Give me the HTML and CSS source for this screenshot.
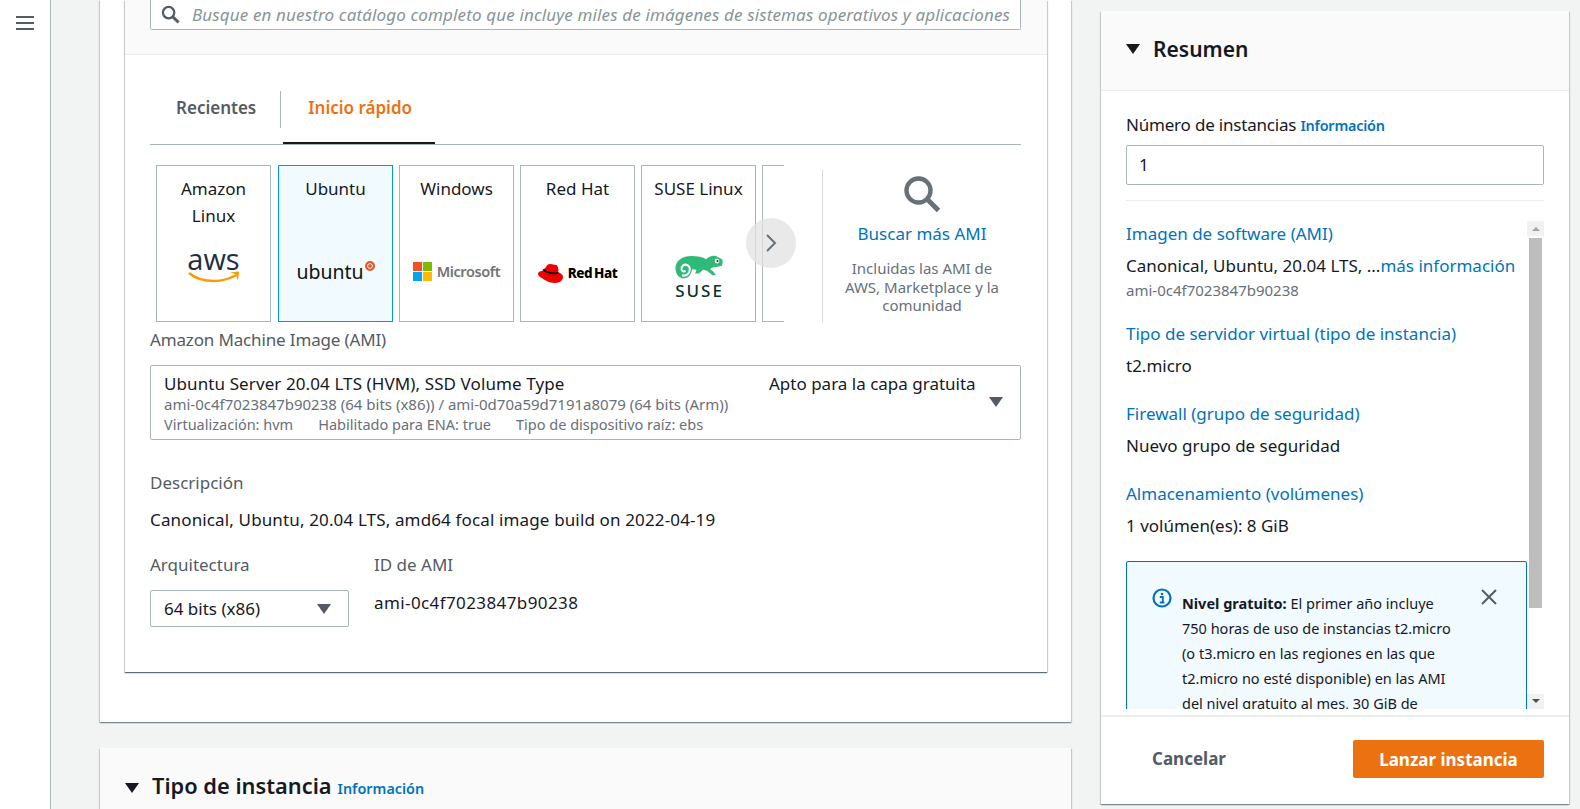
FILE: index.html
```html
<!DOCTYPE html>
<html lang="es">

<head>
    <meta charset="UTF-8">
    <title>Lanzar una instancia</title>
    <link rel="stylesheet" href="styles.css">
</head>

<body>
    <nav class="sidebar">
        <svg class="burger" viewBox="0 0 18 16" width="18" height="16"><path d="M0 2h18M0 8h18M0 14h18" stroke="#545b64" stroke-width="2"/></svg>
    </nav>

    <main class="main">
        <section class="panel">
            <div class="inner">
                <div class="inner-head">
                    <div class="search">
                        <svg viewBox="0 0 20 20" width="19" height="19"><circle cx="8" cy="8" r="6" fill="none" stroke="#545b64" stroke-width="2.4"/><path d="M12.5 12.5l6 6" stroke="#545b64" stroke-width="3"/></svg>
                        <span>Busque en nuestro catálogo completo que incluye miles de imágenes de sistemas operativos y aplicaciones</span>
                    </div>
                </div>
                <div class="inner-body">
                    <div class="tabs">
                        <span class="tab">Recientes</span>
                        <span class="tab tab-active">Inicio rápido</span>
                    </div>

                    <div class="gallery">
                        <div class="cards">
                            <div class="card card-first">
                                <div class="card-name">Amazon<br>Linux</div>
                                <div class="logo logo-aws">
                                    <span class="aws-text">aws</span>
                                    <svg viewBox="0 0 52 13" width="52" height="13"><path d="M1 2c7 6 16 8 25 8 8 0 15-2 22-6" fill="none" stroke="#ff9900" stroke-width="2.4"/><path d="M42 1.500l9-1-1 9-2.500-6.500z" fill="#ff9900"/></svg>
                                </div>
                            </div>
                            <div class="card card-selected">
                                <div class="card-name">Ubuntu</div>
                                <div class="logo logo-ubuntu">
                                    <span class="ubuntu-text">ubuntu</span>
                                    <svg viewBox="0 0 10 10" width="10" height="10"><circle cx="5" cy="5" r="5" fill="#e95420"/><circle cx="5" cy="5" r="2.400" fill="none" stroke="#fff" stroke-width="1"/></svg>
                                </div>
                            </div>
                            <div class="card">
                                <div class="card-name">Windows</div>
                                <div class="logo logo-ms">
                                    <span class="ms-squares"><i class="ms-red"></i><i class="ms-green"></i><i class="ms-blue"></i><i class="ms-yellow"></i></span>
                                    <span class="ms-text">Microsoft</span>
                                </div>
                            </div>
                            <div class="card">
                                <div class="card-name">Red Hat</div>
                                <div class="logo logo-rh">
                                    <svg viewBox="0 0 26 19" width="26" height="19">
                                        <path d="M8 3c1-2 2-3 4-3 3 0 4 1 6 1 1.500 0 2 2 2.500 5l-.5 2c3 1 5 3 5 5 0 3-3 6-8 6-6 0-10-3-15-6-1-1-2-2-2-3 0-2 2-3 4-3z" fill="#e00"/>
                                        <path d="M5 6c2 3 8 5 15 4l.5-2c-5 1-11 0-15-3z" fill="#000"/>
                                    </svg>
                                    <span class="rh-text">Red Hat</span>
                                </div>
                            </div>
                            <div class="card">
                                <div class="card-name">SUSE Linux</div>
                                <div class="logo logo-suse">
                                    <svg viewBox="0 0 48 22" width="48" height="24" preserveAspectRatio="none">
                                        <path d="M.5 12C.5 5 8 1 16 1c7 0 12 1 15 3 3-3 7-4 10-3l6 3c1 2 1 5-.5 6l-5.500 1-4 .5-2 1.500 3 2 3 3.500h-3.500L32 14.500l-4-1-4 3.500h-4l1.500-3.500L17 13c-.5 5-4 8.500-8.500 8.500S.5 17.500.5 12z" fill="#30ba78"/>
                                        <path d="M10.500 14.500c-1.500 1-4 .5-4-2 0-2.500 2.500-4 5-3.500 2.500.5 4 3 3 6-1 3-4.500 4.500-7.500 3.500" fill="none" stroke="#fff" stroke-width="2"/>
                                        <circle cx="42" cy="5.500" r="2.300" fill="#fff"/><circle cx="42.500" cy="5.500" r="1" fill="#0c322c"/>
                                    </svg>
                                    <span class="suse-text">SUSE</span>
                                </div>
                            </div>
                            <div class="card card-cut"></div>
                        </div>
                        <button class="next" type="button">
                            <svg viewBox="0 0 12 20" width="12" height="20"><path d="M2 2l8 8-8 8" fill="none" stroke="#687078" stroke-width="2"/></svg>
                        </button>
                        <div class="more">
                            <svg viewBox="0 0 38 38" width="38" height="38"><circle cx="15.500" cy="15.500" r="12" fill="none" stroke="#687078" stroke-width="4.400"/><path d="M24.500 24.500l11 11" stroke="#687078" stroke-width="5"/></svg>
                            <a class="link more-link">Buscar más AMI</a>
                            <p class="more-note">Incluidas las AMI de AWS, Marketplace y la comunidad</p>
                        </div>
                    </div>

                    <div class="field-label ami-label">Amazon Machine Image (AMI)</div>
                    <div class="ami-select">
                        <div class="ami-line">
                            <span>Ubuntu Server 20.04 LTS (HVM), SSD Volume Type</span>
                            <span class="ami-free">Apto para la capa gratuita</span>
                        </div>
                        <div class="ami-sub">ami-0c4f7023847b90238 (64 bits (x86)) / ami-0d70a59d7191a8079 (64 bits (Arm))</div>
                        <div class="ami-sub ami-attrs">
                            <span>Virtualización: hvm</span>
                            <span>Habilitado para ENA: true</span>
                            <span>Tipo de dispositivo raíz: ebs</span>
                        </div>
                        <i class="caret caret-gray ami-caret"></i>
                    </div>

                    <div class="field-label desc-label">Descripción</div>
                    <p class="desc">Canonical, Ubuntu, 20.04 LTS, amd64 focal image build on 2022-04-19</p>

                    <div class="arch-row">
                        <div class="arch-col">
                            <div class="field-label">Arquitectura</div>
                            <div class="arch-select">64 bits (x86)<i class="caret caret-gray"></i></div>
                        </div>
                        <div class="arch-col">
                            <div class="field-label">ID de AMI</div>
                            <div class="arch-id">ami-0c4f7023847b90238</div>
                        </div>
                    </div>
                </div>
            </div>
        </section>

        <section class="panel panel-next">
            <i class="caret caret-dark"></i>
            <h2>Tipo de instancia</h2>
            <a class="link info">Información</a>
        </section>
    </main>

    <aside class="summary">
        <header class="summary-head">
            <i class="caret caret-dark"></i>
            <h2>Resumen</h2>
        </header>
        <div class="summary-count">
            <div class="count-label">Número de instancias <a class="link info">Información</a></div>
            <div class="count-input">1</div>
        </div>
        <div class="summary-scroll">
            <div class="summary-list">
                <a class="link sum-title">Imagen de software (AMI)</a>
                <p class="sum-value">Canonical, Ubuntu, 20.04 LTS, ...<a class="link">más información</a></p>
                <p class="sum-id">ami-0c4f7023847b90238</p>
                <a class="link sum-title">Tipo de servidor virtual (tipo de instancia)</a>
                <p class="sum-value">t2.micro</p>
                <a class="link sum-title">Firewall (grupo de seguridad)</a>
                <p class="sum-value">Nuevo grupo de seguridad</p>
                <a class="link sum-title">Almacenamiento (volúmenes)</a>
                <p class="sum-value">1 volúmen(es): 8 GiB</p>
                <div class="notice">
                    <svg class="notice-icon" viewBox="0 0 20 20" width="20" height="20"><circle cx="10" cy="10" r="8.500" fill="none" stroke="#0073bb" stroke-width="2.200"/><circle cx="10" cy="6" r="1.300" fill="#0073bb"/><path d="M7.800 9h3v5.200M7.800 14.500h4.600" fill="none" stroke="#0073bb" stroke-width="1.800"/></svg>
                    <p class="notice-text"><b>Nivel gratuito:</b> El primer año incluye<br>750 horas de uso de instancias t2.micro<br>(o t3.micro en las regiones en las que<br>t2.micro no esté disponible) en las AMI<br>del nivel gratuito al mes, 30 GiB de</p>
                    <svg class="notice-close" viewBox="0 0 16 16" width="16" height="16"><path d="M1 1l14 14M15 1L1 15" stroke="#545b64" stroke-width="2"/></svg>
                </div>
            </div>
            <div class="scrollbar">
                <i class="scroll-up"></i>
                <div class="scroll-track"><div class="scroll-thumb"></div></div>
                <i class="scroll-down"></i>
            </div>
        </div>
        <footer class="summary-foot">
            <span class="cancel">Cancelar</span>
            <button class="launch" type="button">Lanzar instancia</button>
        </footer>
    </aside>
</body>

</html>
```

FILE: styles.css
```css
* {
    margin: 0;
    padding: 0;
    box-sizing: border-box;
}

html,
body {
    height: 809px;
    overflow: hidden;
}

body {
    display: flex;
    background-color: #f2f3f3;
    color: #16191f;
    font-family: "Noto Sans", Arial, sans-serif;
    font-size: 17px;
    line-height: 20px;
}

.link {
    color: #0073bb;
}

.sidebar {
    width: 51px;
    flex: none;
    padding: 15px 0 0 16px;
    background-color: #fff;
    border-right: 1px solid #aab7b8;
}

.burger {
    display: block;
}

/* Left column */
.main {
    width: 1020px;
    flex: none;
    margin-left: 49px;
}

.panel {
    width: 971px;
    background-color: #fff;
    box-shadow: 0 1px 1px 0 rgba(0, 28, 36, 0.3), 1px 1px 1px 0 rgba(0, 28, 36, 0.15), -1px 1px 1px 0 rgba(0, 28, 36, 0.15);
}

.panel:first-child {
    height: 722px;
    padding: 0 24px 0 25px;
}

.inner {
    height: 672px;
    background-color: #fff;
    box-shadow: 0 1px 1px 0 rgba(0, 28, 36, 0.5), 1px 1px 1px 0 rgba(0, 28, 36, 0.15), -1px 1px 1px 0 rgba(0, 28, 36, 0.15);
}

.inner-head {
    height: 55px;
    padding: 0 26px 0 25px;
    background-color: #fafafa;
    border-bottom: 1px solid #eaeded;
}

.search {
    display: flex;
    align-items: center;
    gap: 12px;
    height: 30px;
    padding: 0 10px;
    background-color: #fff;
    border: 1px solid #aab7b8;
    border-top: none;
    border-radius: 0 0 2px 2px;
    color: #879596;
    font-style: italic;
    letter-spacing: 0.14px;
    white-space: nowrap;
    overflow: hidden;
}

.search svg {
    flex: none;
}

.inner-body {
    padding: 0 26px 0 25px;
}

.tabs {
    display: flex;
    height: 90px;
    padding-top: 36px;
    border-bottom: 1px solid #aab7b8;
    color: #545b64;
    font-weight: 600;
}

.tab {
    position: relative;
    height: 37px;
    padding: 7px 24px 0 26px;
    border-right: 1px solid #aab7b8;
}

.tab-active {
    width: 154px;
    padding-left: 27px;
    padding-right: 0;
    color: #ec7211;
    border-right: none;
    white-space: nowrap;
}

.tab-active::after {
    content: "";
    position: absolute;
    left: 2px;
    right: 0;
    bottom: -16px;
    height: 2px;
    background-color: #16191f;
}

/* AMI cards */
.gallery {
    position: relative;
    display: flex;
    height: 157px;
    margin-top: 20px;
    padding-left: 6px;
}

.cards {
    display: flex;
    gap: 6px;
    width: 628px;
    overflow: hidden;
}

.card {
    display: flex;
    flex-direction: column;
    flex: none;
    width: 115px;
    height: 157px;
    padding-top: 9px;
    border: 1px solid #aab7b8;
    text-align: center;
    line-height: 27px;
}

.card-first {
    margin-right: 1px;
}

.card-selected {
    background-color: #f1faff;
    border-color: #00a1c9;
}

.card-name {
    height: 54px;
}

.card-cut {
    width: 60px;
}

.logo {
    flex: 1;
    display: flex;
    align-items: center;
    justify-content: center;
    padding-bottom: 8px;
}

.logo-aws {
    flex-direction: column;
    padding-bottom: 18px;
}

.aws-text {
    color: #232f3e;
    font-family: "Open Sans", sans-serif;
    font-size: 29px;
    line-height: 22px;
}

.logo-aws svg {
    margin-top: 1px;
}

.logo-ubuntu {
    gap: 1px;
}

.logo-ubuntu svg {
    margin-bottom: 11px;
}

.ubuntu-text {
    color: #111;
    font-family: "Noto Sans", sans-serif;
    font-size: 19.500px;
}

.logo-ms {
    gap: 5px;
}

.ms-squares {
    display: grid;
    grid-template-columns: 9px 9px;
    grid-template-rows: 9px 9px;
    gap: 1px;
}

.ms-red {
    background-color: #f25022;
}

.ms-green {
    background-color: #7fba00;
}

.ms-blue {
    background-color: #00a4ef;
}

.ms-yellow {
    background-color: #ffb900;
}

.ms-text {
    color: #737373;
    font-size: 14.500px;
    font-weight: 600;
    letter-spacing: -0.4px;
}

.logo-rh {
    gap: 4px;
    padding-bottom: 4px;
}

.rh-text {
    color: #000;
    font-size: 13.500px;
    font-weight: 800;
    letter-spacing: -0.5px;
    word-spacing: -1px;
}

.logo-suse {
    flex-direction: column;
    gap: 2px;
    padding: 6px 0 0;
}

.suse-text {
    color: #0c322c;
    font-size: 17px;
    font-weight: 500;
    line-height: 20px;
    letter-spacing: 2px;
    margin-right: -2px;
}

.next {
    position: absolute;
    left: 596px;
    top: 53px;
    display: flex;
    align-items: center;
    justify-content: center;
    width: 50px;
    height: 50px;
    background-color: rgba(225, 225, 225, 0.75);
    border: none;
    border-radius: 50%;
}

.more {
    display: flex;
    flex-direction: column;
    align-items: center;
    width: 199px;
    margin: 5px 0 0 38px;
    padding-top: 5px;
    border-left: 1px solid #d5dbdb;
}

.more-link {
    margin-top: 11px;
}

.more-note {
    width: 170px;
    margin-top: 15px;
    color: #687078;
    font-size: 15px;
    line-height: 18.500px;
    text-align: center;
}

/* Fields */
.field-label {
    color: #545b64;
}

.ami-label {
    margin-top: 8px;
    letter-spacing: -0.15px;
}

.ami-select {
    position: relative;
    height: 75px;
    margin-top: 15px;
    padding: 8px 13px;
    border: 1px solid #aab7b8;
    border-radius: 2px;
}

.ami-line {
    display: flex;
    justify-content: space-between;
    width: 815px;
    letter-spacing: 0.1px;
}

.ami-free {
    width: 210px;
    letter-spacing: 0;
}

.ami-sub {
    color: #687078;
    font-size: 15px;
    line-height: 20px;
}

.ami-attrs {
    display: flex;
    gap: 25px;
    font-size: 14.500px;
}

.caret {
    display: block;
    width: 0;
    height: 0;
    border-left: 7px solid transparent;
    border-right: 7px solid transparent;
    border-top: 10px solid #16191f;
}

.caret-gray {
    border-top-color: #545b64;
}

.ami-caret {
    position: absolute;
    right: 17px;
    top: 31px;
}

.desc-label {
    margin-top: 33px;
}

.desc {
    margin-top: 17px;
    letter-spacing: 0.14px;
}

.arch-row {
    display: flex;
    gap: 25px;
    margin-top: 25px;
}

.arch-select {
    display: flex;
    align-items: center;
    justify-content: space-between;
    width: 199px;
    height: 37px;
    margin-top: 15px;
    padding: 0 17px 0 13px;
    border: 1px solid #aab7b8;
    border-radius: 2px;
}

.arch-id {
    margin-top: 18px;
    letter-spacing: 0.4px;
}

.panel-next {
    display: flex;
    align-items: flex-start;
    height: 80px;
    margin-top: 26px;
    padding: 25px 25px 0;
    background-color: #fafafa;
}

.panel-next .caret {
    margin: 10px 13px 0 0;
}

h2 {
    font-size: 21px;
    font-weight: 600;
    line-height: 26px;
}

.panel-next h2 {
    font-size: 21.800px;
}

.info {
    font-size: 14.400px;
    font-weight: 600;
}

.panel-next .info {
    margin: 6px 0 0 6px;
}

/* Summary */
.summary {
    display: flex;
    flex-direction: column;
    width: 468px;
    height: 793px;
    margin: 11px 0 0 -19px;
    flex: none;
    background-color: #fff;
    box-shadow: 0 1px 1px 0 rgba(0, 28, 36, 0.3), 1px 1px 1px 0 rgba(0, 28, 36, 0.15), -1px 1px 1px 0 rgba(0, 28, 36, 0.15);
}

.summary-head {
    display: flex;
    align-items: center;
    gap: 13px;
    height: 80px;
    padding: 0 25px 3px;
    background-color: #fafafa;
    border-bottom: 1px solid #eaeded;
}

.summary-count {
    height: 110px;
    margin: 0 25px;
    padding-top: 24px;
    border-bottom: 1px solid #eaeded;
}

.count-label {
    letter-spacing: -0.2px;
}

.count-input {
    height: 40px;
    margin-top: 9px;
    padding: 9px 12px;
    border: 1px solid #aab7b8;
    border-radius: 2px;
}

.summary-scroll {
    display: flex;
    flex: none;
    height: 488px;
    margin: 20px 25px 0;
    overflow: hidden;
}

.summary-list {
    width: 401px;
    flex: none;
}

.sum-title {
    display: block;
    margin-bottom: 12px;
}

.sum-value {
    margin-bottom: 28px;
}

.sum-title:first-child {
    margin-top: 3px;
}

.sum-value:nth-child(2) {
    margin-bottom: 4px;
}

.sum-id {
    margin-bottom: 24px;
    color: #687078;
    font-size: 15px;
}

.notice {
    position: relative;
    display: flex;
    margin-top: -3px;
    padding: 29px 25px 30px;
    background-color: #f1faff;
    border: 1px solid #0073bb;
    border-radius: 2px;
}

.notice-icon {
    flex: none;
    margin: -3px 10px 0 0;
}

.notice-text {
    font-size: 14.500px;
    line-height: 25px;
    white-space: nowrap;
}

.notice-close {
    position: absolute;
    right: 29px;
    top: 27px;
}

.scrollbar {
    display: flex;
    flex-direction: column;
    align-items: center;
    width: 17px;
    background-color: #f1f1f1;
}

.scroll-up,
.scroll-down {
    flex: none;
    width: 0;
    height: 0;
    border-left: 4px solid transparent;
    border-right: 4px solid transparent;
}

.scroll-up {
    margin: 6px 0 5px;
    border-bottom: 4px solid #a3a3a3;
}

.scroll-down {
    margin: 5px 0 6px;
    border-top: 4px solid #505050;
}

.scroll-track {
    flex: 1;
    width: 100%;
    padding: 2px 2px 0;
    background-color: #fff;
}

.scroll-thumb {
    height: 370px;
    background-color: #bdbdbd;
}

.summary-foot {
    display: flex;
    align-items: center;
    justify-content: space-between;
    flex: 1;
    margin-top: 6px;
    padding: 0 25px 3px 51px;
    border-top: 2px solid #eaeded;
}

.cancel {
    color: #545b64;
    font-weight: 700;
}

.launch {
    width: 191px;
    height: 38px;
    background-color: #ec7211;
    border: none;
    border-radius: 2px;
    color: #fff;
    font-family: inherit;
    font-size: 17px;
    font-weight: 700;
}
```
